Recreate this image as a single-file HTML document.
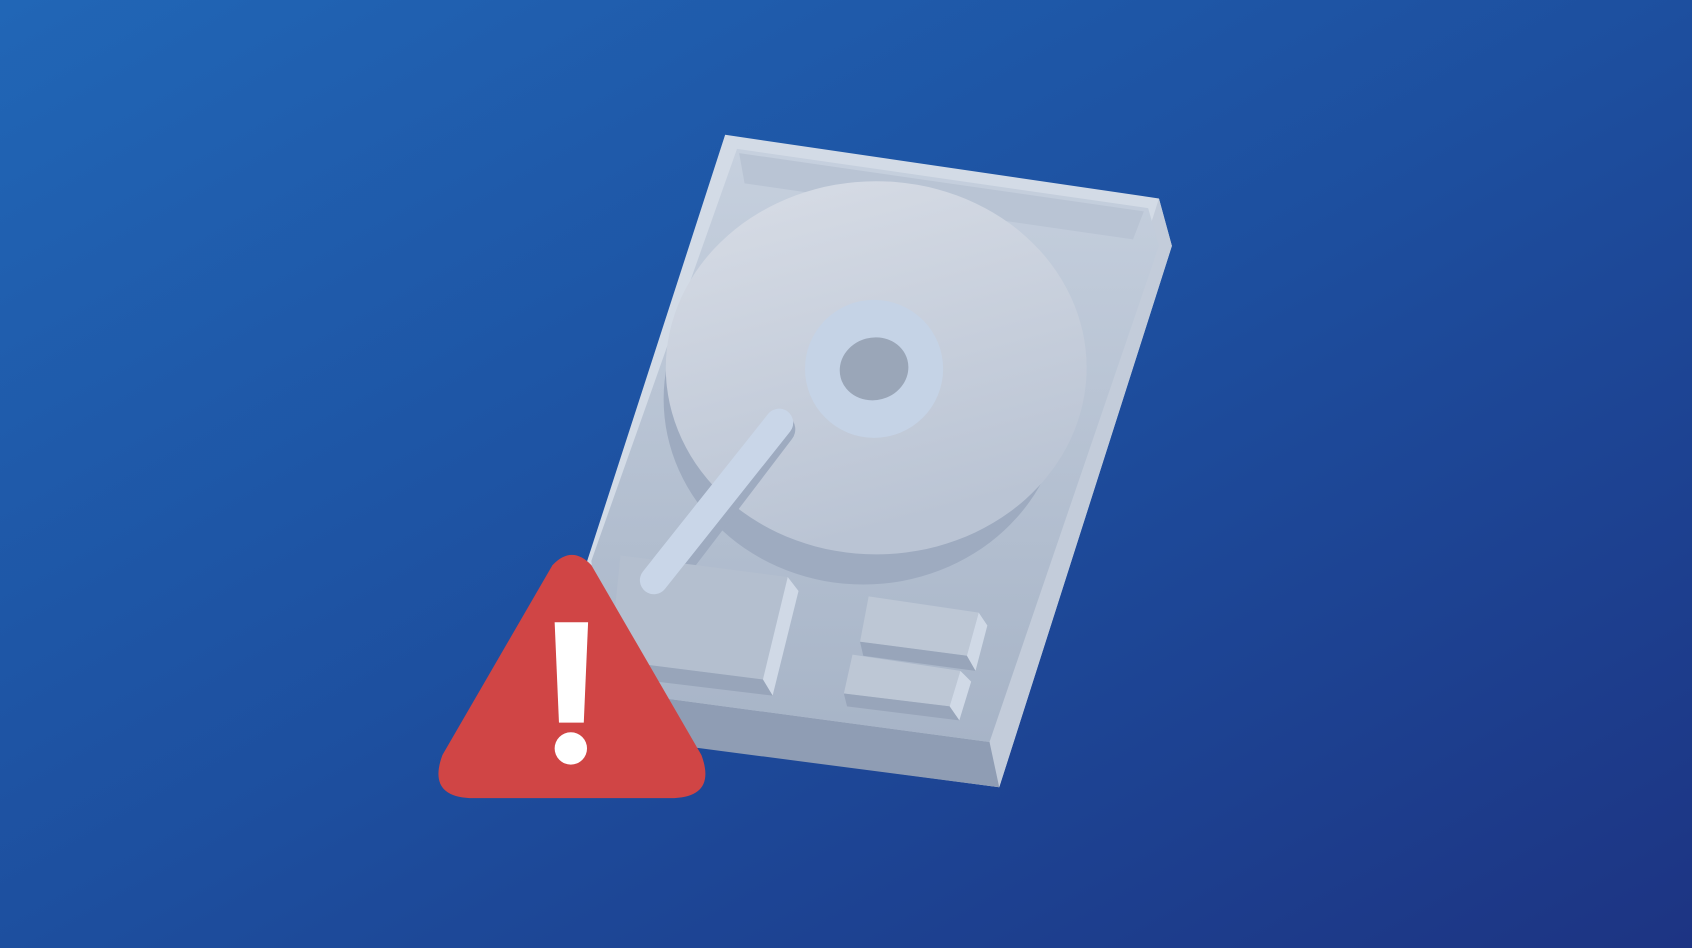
<!DOCTYPE html>
<html><head><meta charset="utf-8"><style>html,body{margin:0;padding:0;overflow:hidden}svg{display:block}</style></head>
<body>
<svg width="1692" height="948" viewBox="0 0 1568 879" preserveAspectRatio="none" xmlns="http://www.w3.org/2000/svg">
<defs>
<linearGradient id="bg" x1="0" y1="0" x2="1" y2="1">
<stop offset="0" stop-color="#2166b6"/><stop offset="0.5" stop-color="#1d4f9f"/><stop offset="1" stop-color="#1d3483"/>
</linearGradient>
<linearGradient id="body" x1="0" y1="0" x2="0" y2="1">
<stop offset="0" stop-color="#c6d0de"/><stop offset="1" stop-color="#a7b4c7"/>
</linearGradient>
<linearGradient id="disk" x1="0" y1="0" x2="0.3" y2="1">
<stop offset="0" stop-color="#d8dde6"/><stop offset="1" stop-color="#bac4d4"/>
</linearGradient>
</defs>
<rect width="1568" height="879" fill="url(#bg)"/>
<!-- drive body -->
<polygon points="672,125 1074,184 1086,228 926,730 495,672" fill="#d3dbe6"/>
<polygon points="1074,184 1086,228 926,730 915,688" fill="#c3ccda"/>
<polygon points="683,138 1064,193 1074,228 917,688 560,640 548,520" fill="url(#body)"/>
<polygon points="690,170 1050,222 1060,196 685,142" fill="#b9c4d4"/>
<polygon points="560,640 917,688 926,730 620,690" fill="#8f9db4"/>
<!-- disk shadow -->
<ellipse cx="800" cy="370" rx="185" ry="172" fill="#9eabc0"/>
<ellipse cx="812" cy="341" rx="195" ry="173" fill="url(#disk)"/>
<circle cx="810" cy="342" r="64" fill="#c5d3e6"/>
<ellipse cx="810" cy="342" rx="32" ry="29" fill="#9aa6b8" transform="rotate(-15 810 342)"/>
<!-- arm -->
<path d="M722,398 L620,532" stroke="#9eabc0" stroke-width="30" stroke-linecap="round" fill="none"/>
<path d="M722,392 L606,538" stroke="#c9d6e8" stroke-width="26" stroke-linecap="round" fill="none"/>
<!-- blocks -->
<polygon points="575,515 730,535 707,630 565,612" fill="#b4bfcf"/>
<polygon points="730,535 740,548 716,645 707,630" fill="#d0d9e6"/>
<polygon points="565,612 707,630 716,645 575,628" fill="#98a5ba"/>
<path d="M722,392 L606,538" stroke="#c9d6e8" stroke-width="26" stroke-linecap="round" fill="none"/>
<polygon points="805,553 907,568 896,608 797,595" fill="#bdc7d5"/>
<polygon points="907,568 915,580 904,622 896,608" fill="#d0d9e6"/>
<polygon points="797,595 896,608 904,622 800,608" fill="#98a5ba"/>
<polygon points="790,607 890,622 880,655 782,643" fill="#bdc7d5"/>
<polygon points="890,622 900,632 889,668 880,655" fill="#d0d9e6"/>
<polygon points="782,643 880,655 889,668 785,655" fill="#98a5ba"/>
<!-- warning -->
<path d="M512,524 Q530,505 548,524 L650,700 Q664,738 625,740 L435,740 Q396,738 410,700 Z" fill="#d04545"/>
<polygon points="514,577 545,577 541,670 518,670" fill="#ffffff"/>
<circle cx="529" cy="694" r="15" fill="#ffffff"/>
</svg>
</body></html>
